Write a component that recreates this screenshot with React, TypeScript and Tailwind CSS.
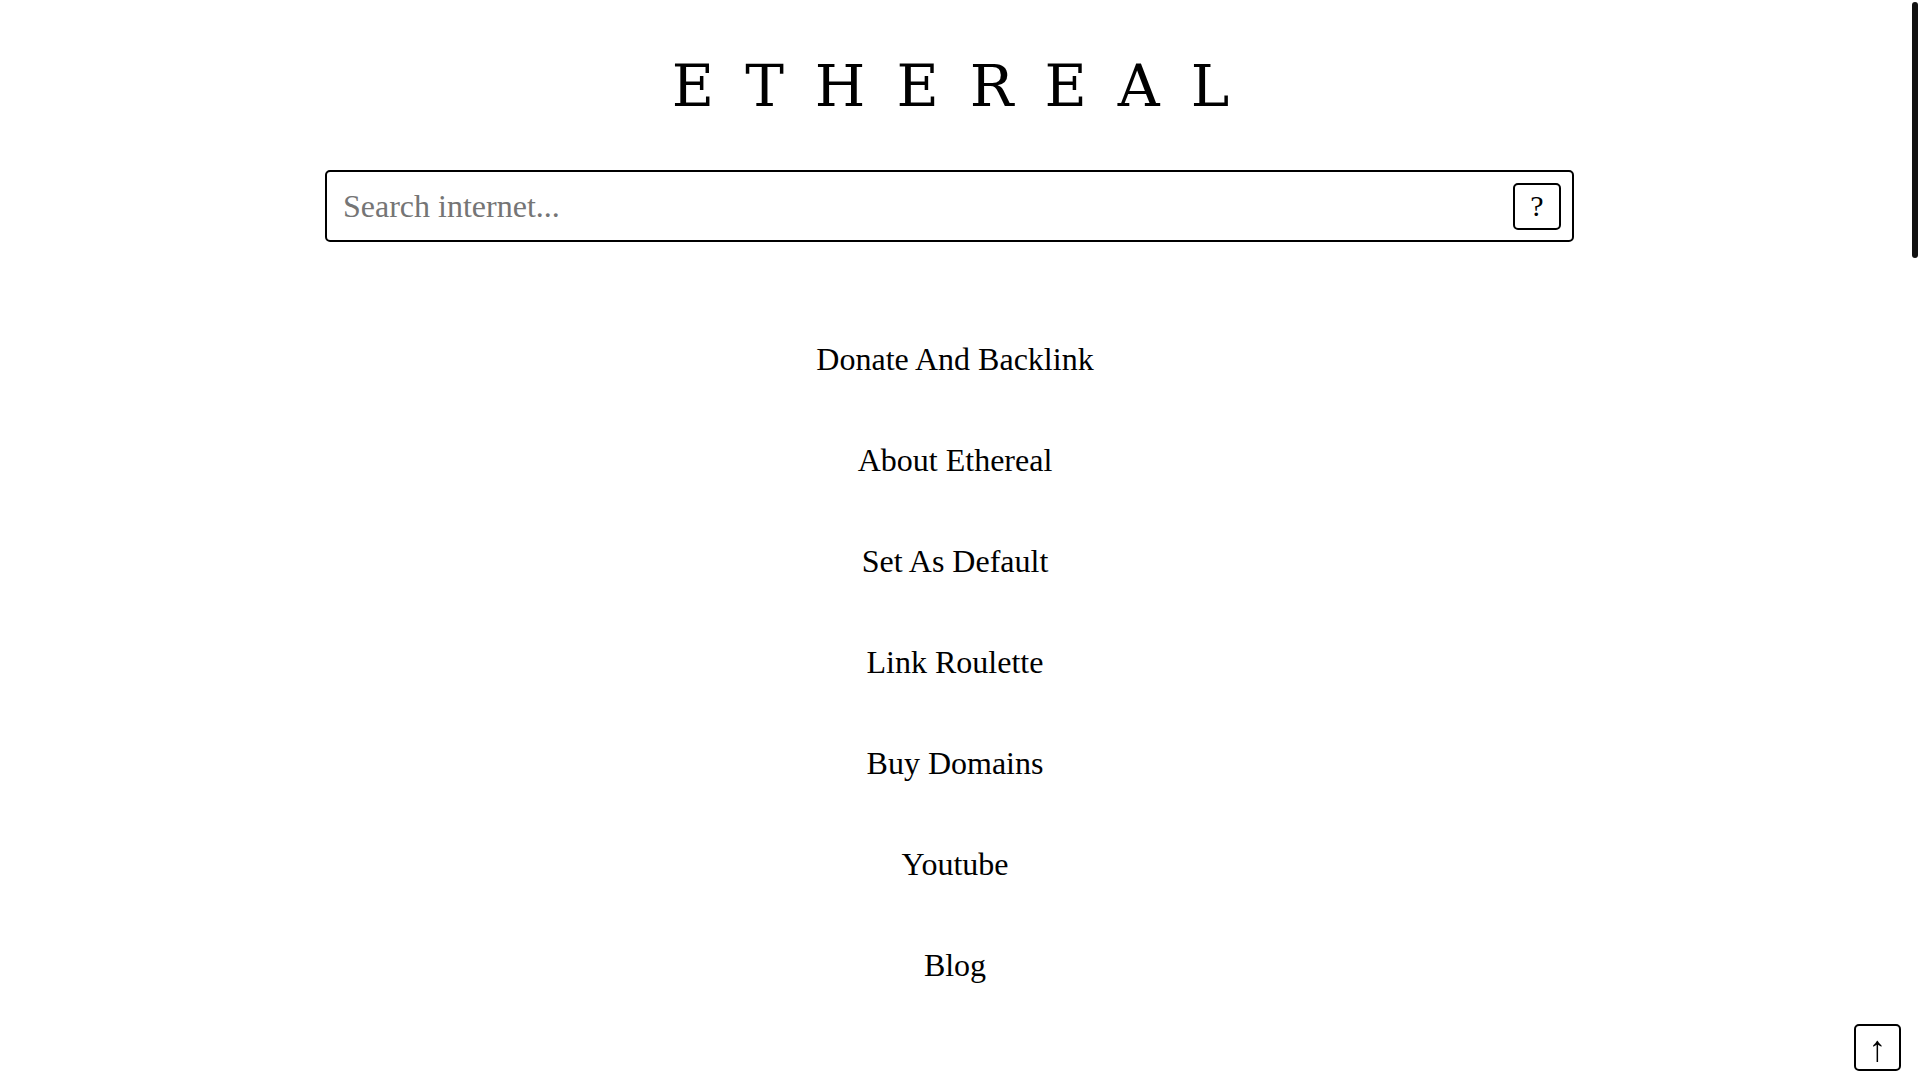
import React from "react";

const links = [
  "Donate And Backlink",
  "About Ethereal",
  "Set As Default",
  "Link Roulette",
  "Buy Domains",
  "Youtube",
  "Blog",
];

export default function App() {
  return (
    <div className="relative flex h-screen w-full overflow-hidden bg-white text-black font-['Liberation_Serif',serif]">
      <main className="flex w-[1910px] flex-col items-center pt-[52px]">
        <h1 className="h-[68px] pl-[22px] text-[58px] leading-[68px] font-normal tracking-[31px] font-['DejaVu_Serif',serif]">
          ETHEREAL
        </h1>

        <form
          className="mt-[50px] mr-[11px] flex h-[72px] w-[1249px] items-center rounded-[5px] border-2 border-black pl-4 pr-[11px]"
          onSubmit={(e) => e.preventDefault()}
        >
          <input
            type="text"
            placeholder="Search internet..."
            className="h-full min-w-0 flex-1 bg-transparent text-[32px] outline-none placeholder:text-[#757575] font-['Liberation_Serif',serif]"
          />
          <button
            type="button"
            className="flex h-[47px] w-[48px] items-center justify-center rounded-[5px] border-2 border-black bg-white text-[30px] leading-none font-['Liberation_Serif',serif]"
          >
            ?
          </button>
        </form>

        <nav className="mt-[99px] flex flex-col items-center gap-[64px]">
          {links.map((l) => (
            <a
              key={l}
              href="#"
              className="text-[32px] leading-[37px] text-black no-underline"
            >
              {l}
            </a>
          ))}
        </nav>
      </main>

      <button
        type="button"
        className="fixed bottom-[9px] right-[19px] flex h-[47px] w-[47px] items-center justify-center rounded-[5px] border-2 border-black bg-white pt-[2px] text-[36px] leading-none font-['Liberation_Serif',serif]"
      >
        ↑
      </button>

      <div className="fixed right-[2px] top-[2px] h-[256px] w-[6px] rounded-full bg-[#111]" />
    </div>
  );
}
